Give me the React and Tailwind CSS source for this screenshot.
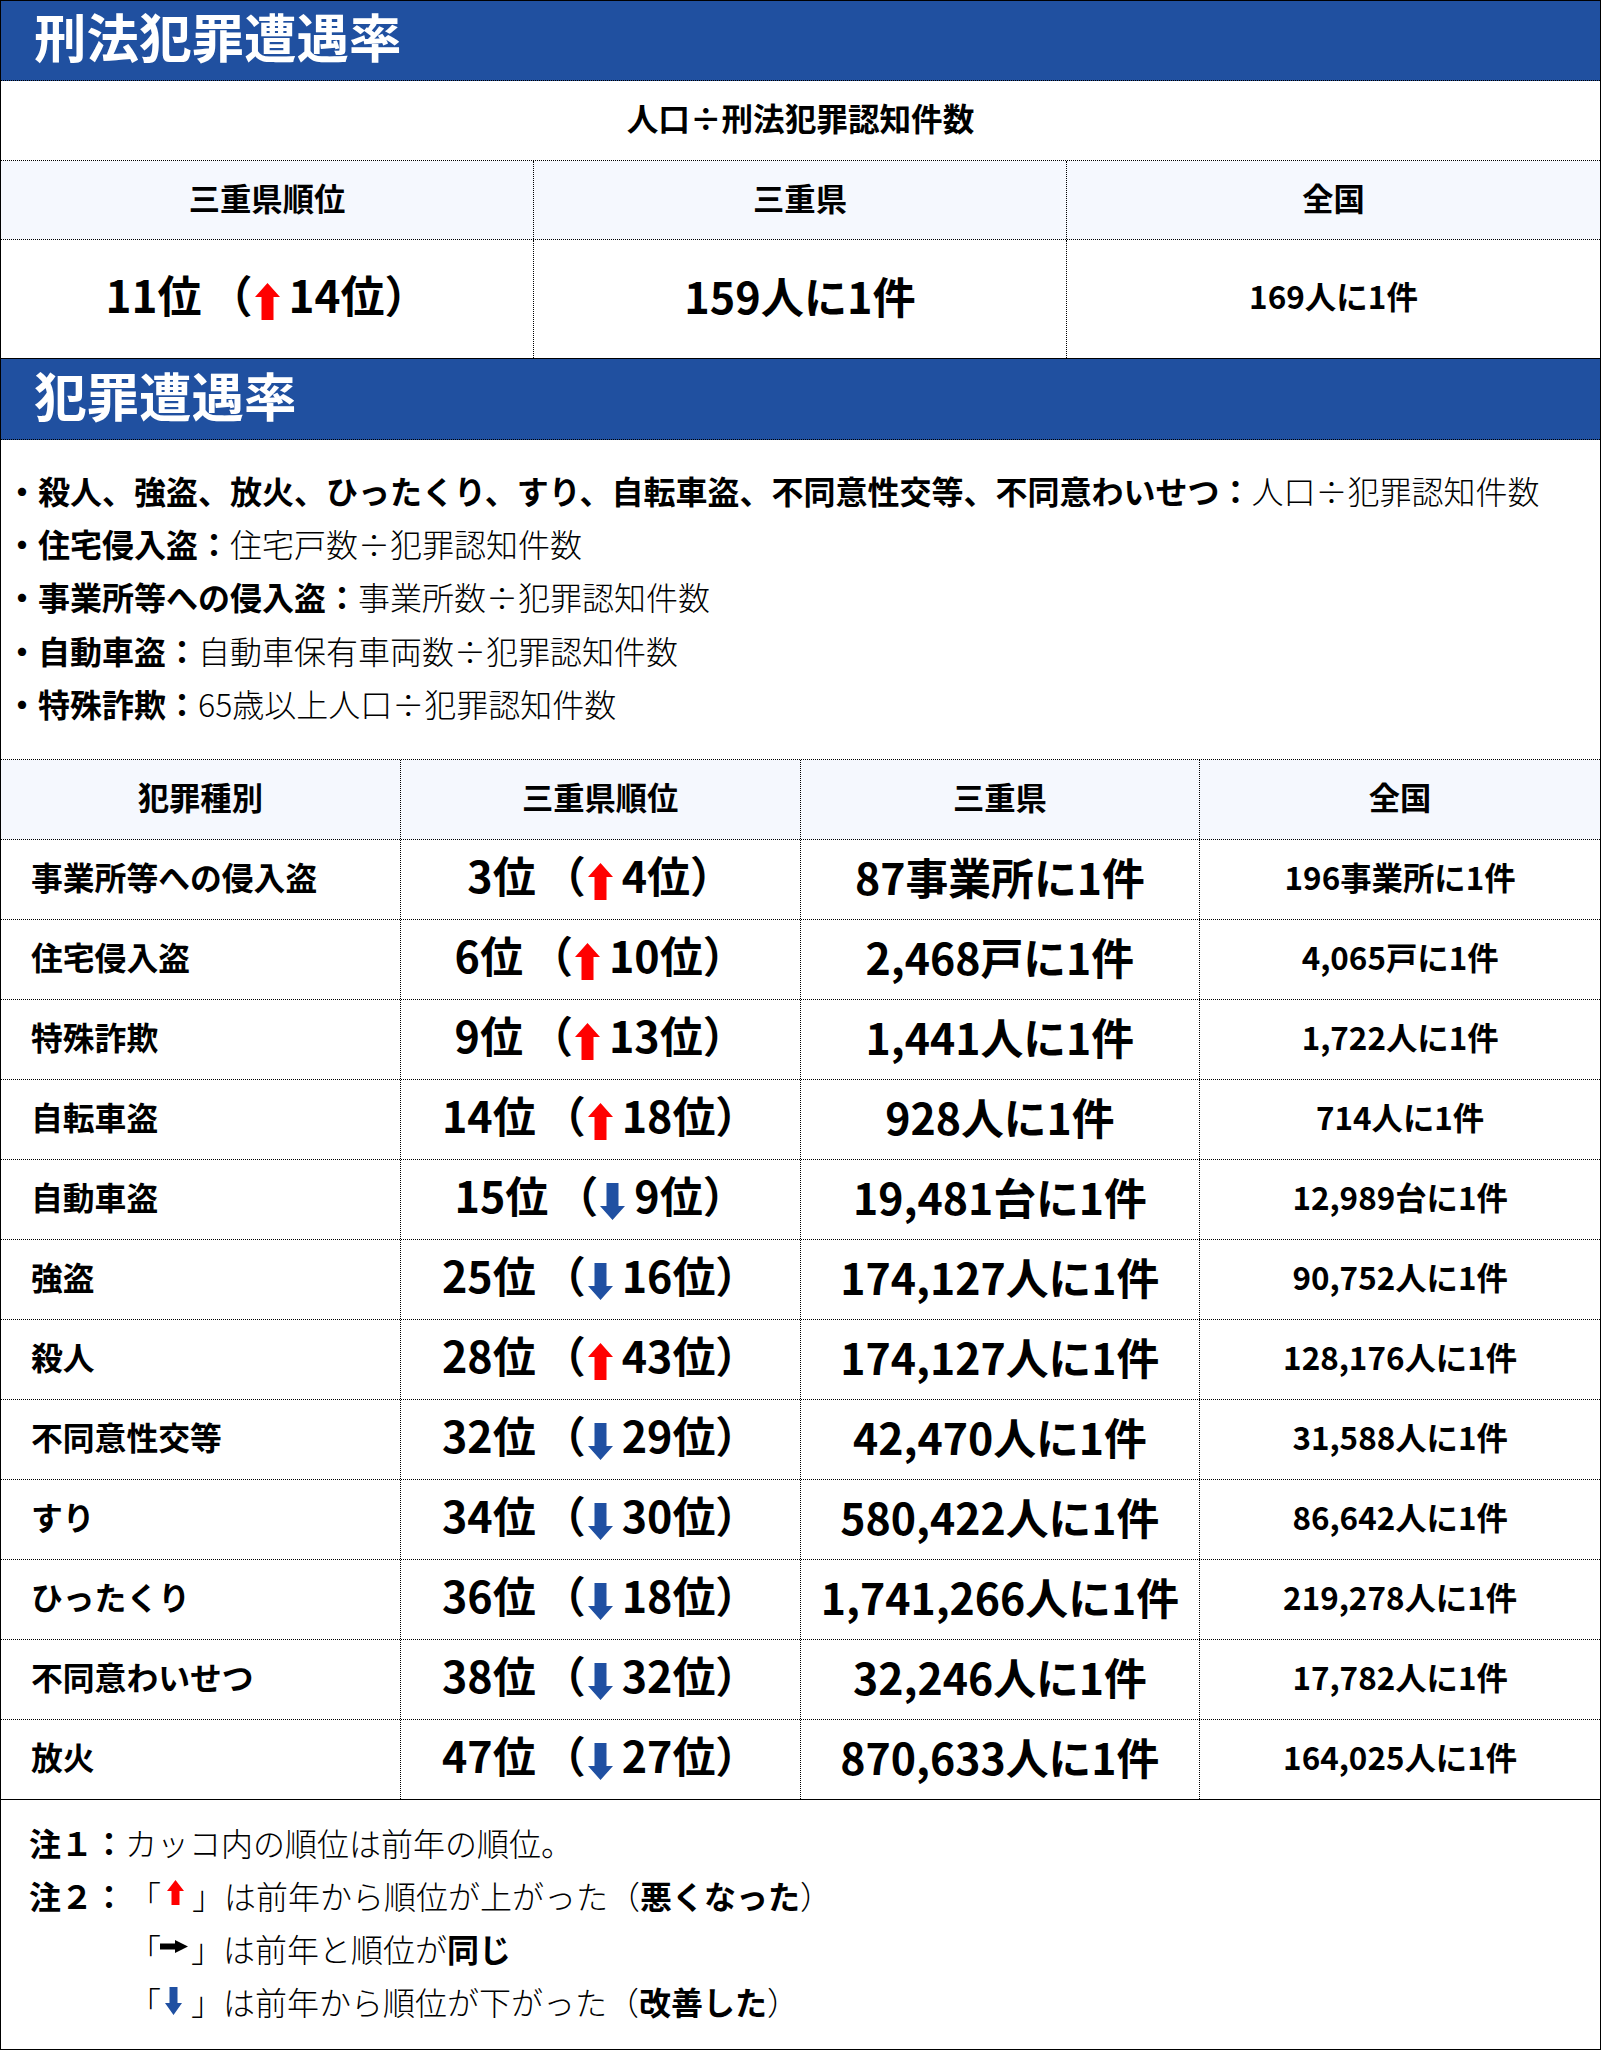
import React from "react";

function UpBig() {
  return (
    <svg width="25" height="37" viewBox="0 0 25 37" className="inline-block ml-[2px] mr-[9px]">
      <path d="M12.5 0 L25 14 L18.5 14 L18.5 37 L6.5 37 L6.5 14 L0 14 Z" fill="#ff0000" />
    </svg>
  );
}
function DownBig() {
  return (
    <svg width="25" height="37" viewBox="0 0 25 37" className="inline-block ml-[2px] mr-[9px]">
      <path d="M6.5 0 H18.5 V23 H25 L12.5 37 L0 23 H6.5 Z" fill="#2050a2" />
    </svg>
  );
}
function UpSmall() {
  return (
    <svg width="17" height="25" viewBox="0 0 17 25" className="shrink-0 ml-[6px] mr-[8px] mb-[4px]">
      <path d="M8.5 0 L17 11 L12.5 11 L12.5 25 L4.5 25 L4.5 11 L0 11 Z" fill="#ff0000" />
    </svg>
  );
}
function DownSmall() {
  return (
    <svg width="17" height="28" viewBox="0 0 17 28" className="shrink-0 ml-[4px] mr-[9px]">
      <path d="M4.5 0 H12.5 V16 H17 L8.5 28 L0 16 H4.5 Z" fill="#2050a2" />
    </svg>
  );
}
function RightSmall() {
  return (
    <svg width="28" height="13" viewBox="0 0 28 13" className="shrink-0 ml-[-1px] mr-[3px] mb-[3px]">
      <path d="M0 3.5 H15 V0 L28 6.5 L15 13 V9.5 H0 Z" fill="#000" />
    </svg>
  );
}

function Rank({ now, dir, prev, big }) {
  return (
    <div className={"whitespace-nowrap font-bold leading-none " + (big ? "text-[44px]" : "text-[43px]")}>
      <span className="mr-[7px]">{now}位</span>（{dir === "up" ? <UpBig /> : <DownBig />}{prev}位）
    </div>
  );
}

const rows = [
  ["事業所等への侵入盗", "3", "up", "4", "87事業所に1件", "196事業所に1件"],
  ["住宅侵入盗", "6", "up", "10", "2,468戸に1件", "4,065戸に1件"],
  ["特殊詐欺", "9", "up", "13", "1,441人に1件", "1,722人に1件"],
  ["自転車盗", "14", "up", "18", "928人に1件", "714人に1件"],
  ["自動車盗", "15", "down", "9", "19,481台に1件", "12,989台に1件"],
  ["強盗", "25", "down", "16", "174,127人に1件", "90,752人に1件"],
  ["殺人", "28", "up", "43", "174,127人に1件", "128,176人に1件"],
  ["不同意性交等", "32", "down", "29", "42,470人に1件", "31,588人に1件"],
  ["すり", "34", "down", "30", "580,422人に1件", "86,642人に1件"],
  ["ひったくり", "36", "down", "18", "1,741,266人に1件", "219,278人に1件"],
  ["不同意わいせつ", "38", "down", "32", "32,246人に1件", "17,782人に1件"],
  ["放火", "47", "down", "27", "870,633人に1件", "164,025人に1件"],
];

const bullets = [
  ["殺人、強盗、放火、ひったくり、すり、自転車盗、不同意性交等、不同意わいせつ：", "人口÷犯罪認知件数"],
  ["住宅侵入盗：", "住宅戸数÷犯罪認知件数"],
  ["事業所等への侵入盗：", "事業所数÷犯罪認知件数"],
  ["自動車盗：", "自動車保有車両数÷犯罪認知件数"],
  ["特殊詐欺：", "65歳以上人口÷犯罪認知件数"],
];

export default function App() {
  return (
    <div className="w-[1601px] h-[2050px] bg-white text-black font-['Noto_Sans_CJK_JP','Noto_Sans',sans-serif]">
      <div className="w-full h-full border border-black flex flex-col">
        {/* Section 1 header */}
        <div className="h-[80px] bg-[#2050a0] border-b border-dotted border-black flex items-center pl-[33px] pb-[10px]">
          <h1 className="text-white text-[52.5px] font-bold leading-none">刑法犯罪遭遇率</h1>
        </div>
        <div className="h-[80px] border-b border-dotted border-black flex items-center justify-center pb-[5px]">
          <span className="text-[31.6px] font-bold leading-none">人口÷刑法犯罪認知件数</span>
        </div>
        <div className="h-[79px] grid grid-cols-3 bg-[#f5f8fe] border-b border-dotted border-black">
          <div className="flex items-center justify-center pb-[4px] border-r border-dotted border-black text-[31.3px] font-bold">三重県順位</div>
          <div className="flex items-center justify-center pb-[4px] border-r border-dotted border-black text-[31.3px] font-bold">三重県</div>
          <div className="flex items-center justify-center pb-[4px] text-[31.3px] font-bold">全国</div>
        </div>
        <div className="h-[119px] grid grid-cols-3 border-b border-solid border-black">
          <div className="flex items-center justify-center pb-[6px] border-r border-dotted border-black">
            <Rank now="11" dir="up" prev="14" big />
          </div>
          <div className="flex items-center justify-center pb-[6px] border-r border-dotted border-black text-[43.2px] font-bold leading-none">159人に1件</div>
          <div className="flex items-center justify-center pb-[6px] text-[31.5px] font-bold leading-none">169人に1件</div>
        </div>

        {/* Section 2 header */}
        <div className="h-[81px] bg-[#2050a0] border-b border-dotted border-black flex items-center pl-[33px] pb-[10px]">
          <h2 className="text-white text-[52.5px] font-bold leading-none">犯罪遭遇率</h2>
        </div>
        <div className="h-[320px] border-b border-dotted border-black pt-[23px] pl-[5px]">
          {bullets.map(([b, r], i) => (
            <div key={i} className="h-[53.3px] flex items-center text-[32px] leading-none whitespace-nowrap">
              <span className="font-bold">・{b}</span>
              <span className="font-light">{r}</span>
            </div>
          ))}
        </div>

        {/* Table */}
        <div className="h-[80px] grid grid-cols-4 bg-[#f5f8fe] border-b border-dotted border-black">
          {["犯罪種別", "三重県順位", "三重県", "全国"].map((t, i) => (
            <div key={i} className={"flex items-center justify-center pb-[4px] text-[31.3px] font-bold " + (i < 3 ? "border-r border-dotted border-black" : "")}>{t}</div>
          ))}
        </div>
        {rows.map((r, i) => (
          <div key={i} className={"h-[80px] grid grid-cols-4 border-b border-black " + (i === rows.length - 1 ? "border-solid" : "border-dotted")}>
            <div className="flex items-center pl-[30px] pb-[5px] border-r border-dotted border-black text-[31.8px] font-bold leading-none">{r[0]}</div>
            <div className="flex items-center justify-center pb-[6px] border-r border-dotted border-black">
              <Rank now={r[1]} dir={r[2]} prev={r[3]} />
            </div>
            <div className="flex items-center justify-center pb-[6px] border-r border-dotted border-black text-[42.8px] font-bold leading-none">{r[4]}</div>
            <div className="flex items-center justify-center pb-[5px] text-[31.4px] font-bold leading-none">{r[5]}</div>
          </div>
        ))}

        {/* Notes */}
        <div className="flex-1 pt-[15px] pl-[28px] text-[32px] leading-none">
          <div className="h-[53px] flex items-center whitespace-nowrap">
            <span className="font-bold">注１：</span>
            <span className="font-light">カッコ内の順位は前年の順位。</span>
          </div>
          <div className="h-[53px] flex items-center whitespace-nowrap">
            <span className="font-bold">注２：</span>
            <span className="font-light ml-[4px]">「</span>
            <UpSmall />
            <span className="font-light">」は前年から順位が上がった（</span>
            <span className="font-bold">悪くなった</span>
            <span className="font-light">）</span>
          </div>
          <div className="h-[53px] flex items-center whitespace-nowrap pl-[96px]">
            <span className="font-light ml-[4px]">「</span>
            <RightSmall />
            <span className="font-light">」は前年と順位が</span>
            <span className="font-bold">同じ</span>
          </div>
          <div className="h-[53px] flex items-center whitespace-nowrap pl-[96px]">
            <span className="font-light ml-[4px]">「</span>
            <DownSmall />
            <span className="font-light">」は前年から順位が下がった（</span>
            <span className="font-bold">改善した</span>
            <span className="font-light">）</span>
          </div>
        </div>
      </div>
    </div>
  );
}
